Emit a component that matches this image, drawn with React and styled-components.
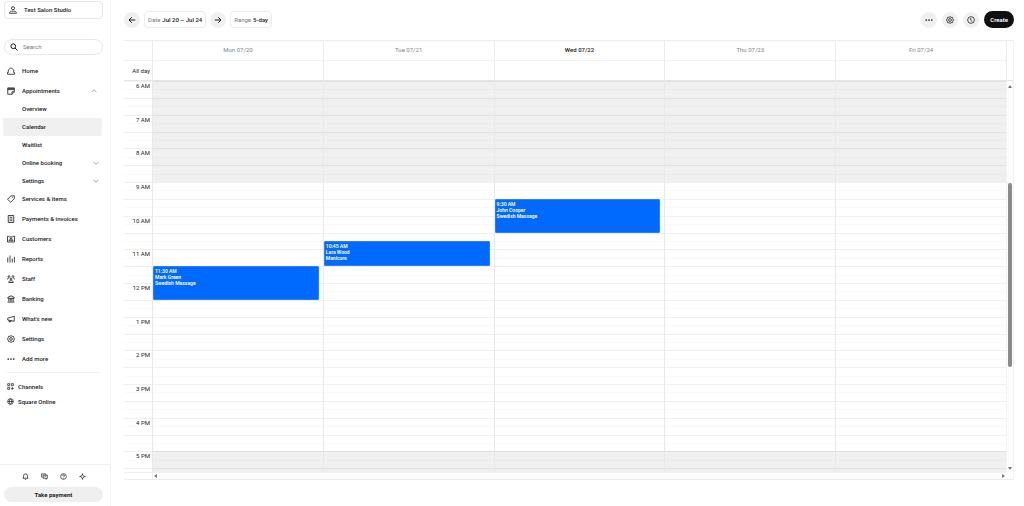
import React from "react";
import styled, { createGlobalStyle, css } from "styled-components";

const GlobalStyle = createGlobalStyle`
  *, *::before, *::after { box-sizing: border-box; }
  body {
    margin: 0;
    background: #fff;
    color: #1a1a1a;
    font-family: Roboto, "Liberation Sans", sans-serif;
    font-size: 6px;
    line-height: 8px;
  }
  button, input { font: inherit; color: inherit; }
  button { border: 0; padding: 0; background: none; cursor: pointer; }
  ul { list-style: none; margin: 0; padding: 0; }
`;

const Shell = styled.div`
  display: flex;
  height: 100vh;
`;

/* ---------- icons ---------- */

const Svg = styled.svg`
  display: block;
  flex: none;
  width: ${(p) => p.$size}px;
  height: ${(p) => p.$size}px;
  fill: none;
  stroke: currentColor;
  stroke-width: ${(p) => p.$weight};
`;

const gear =
  "M8 1.2 L10.2 2.6 L13 2.8 L13.6 5.6 L15 8 L13.6 10.4 L13 13.2 L10.2 13.4 L8 14.8 L5.8 13.4 L3 13.2 L2.4 10.4 L1 8 L2.4 5.6 L3 2.8 L5.8 2.6 Z";

const shapes = {
  person: (
    <>
      <circle cx="8" cy="4.4" r="3.1" />
      <path d="M1 14.5c0-3 3-4.200 7-4.200s7 1.200 7 4.200z" />
    </>
  ),
  search: (
    <>
      <circle cx="6.500" cy="6.500" r="4.700" />
      <path d="M10 10l5 5" />
    </>
  ),
  home: <path d="M8 1.500L13.500 6V11H15v3.500H1V11h1.500V6z" />,
  calendar: (
    <>
      <path d="M1.500 1.800h13V10L10 14.500H1.500zM1.500 5.200h13M14.500 9.500H10v5" />
      <path d="M1.500 3.300h13" />
    </>
  ),
  tag: (
    <>
      <path d="M8 1.800L14.800 1.500 14.500 7.500 7.500 14.500 1 8.500z" />
      <path d="M11 4.500v1.500" />
    </>
  ),
  invoice: <path d="M2.500 1h11v14h-11zM5 4.500h6M5 8h6M5 11.500h6" />,
  customers: (
    <>
      <path d="M5 2.500H1v11.500h14V2.500h-4" />
      <circle cx="8" cy="5.200" r="2" />
      <path d="M4 11.500c0-2 1.500-3 4-3s4 1 4 3z" />
    </>
  ),
  reports: <path d="M1.500 5v10M6 1v14M10.500 7v8M14.800 3.500v11.500" />,
  staff: (
    <>
      <circle cx="4" cy="3" r="1.700" />
      <circle cx="12" cy="3" r="1.700" />
      <circle cx="8" cy="8" r="1.900" />
      <path d="M.800 9c0-2 1.200-3 3.200-3M15.200 9c0-2-1.200-3-3.200-3M3.500 15c0-2.300 1.700-3.500 4.500-3.500s4.500 1.200 4.500 3.500z" />
    </>
  ),
  bank: <path d="M1.500 6.500V4.800L8 1.500l6.500 3.300v1.700zM3.500 6.500V13M6.500 6.500V13M9.500 6.500V13M12.500 6.500V13M1 14.200h14" />,
  megaphone: <path d="M1.500 6.200L14.500 2.500v10L1.500 10zM4 10.500v2.800h4v-1.800" />,
  gear: (
    <>
      <path d={gear} />
      <circle cx="8" cy="8" r="2.800" />
    </>
  ),
  more: (
    <g fill="currentColor" stroke="none">
      <circle cx="2.500" cy="8" r="1.700" />
      <circle cx="8" cy="8" r="1.700" />
      <circle cx="13.500" cy="8" r="1.700" />
    </g>
  ),
  channels: <path d="M1.500 1.500h4.500v4.500H1.500zM10 1.500h4.500v4.500H10zM1.500 10h4.500v4.500H1.500zM12.300 9v6.500M9 12.300h6.500" />,
  globe: (
    <>
      <circle cx="8" cy="8" r="6.500" />
      <path d="M1.500 8h13M8 1.500c-4 4-4 9 0 13M8 1.500c4 4 4 9 0 13" />
    </>
  ),
  bell: <path d="M3.500 12V6.500a4.500 4.500 0 0 1 9 0V12M1.800 12h12.400M6.500 14.500h3" />,
  chat: (
    <>
      <path d="M4 9.500H1.500V2h9.500v2.500" />
      <path d="M5 5h9.500v7H12v2.500L9 12H5zM8 8.500h3.500" />
    </>
  ),
  help: (
    <>
      <circle cx="8" cy="8" r="6.500" />
      <path d="M5.800 6.500c0-3 4.500-3 4.500 0C10.300 8 8 8 8 9.700M8 11v1.500" />
    </>
  ),
  spark: <path d="M8 1.500c.500 4.500 2 6 6.500 6.500-4.500.500-6 2-6.500 6.500C7.500 10 6 8.500 1.500 8 6 7.500 7.500 6 8 1.500z" />,
  clock: (
    <>
      <circle cx="8" cy="8" r="6.700" />
      <path d="M7.500 4v4.500l3 2.500" />
    </>
  ),
  left: <path d="M14.500 8H2M7.500 2.500L2 8l5.500 5.500" />,
  right: <path d="M1.500 8H14M8.500 2.500L14 8l-5.500 5.500" />,
  up: <path d="M1.500 11L8 4.500l6.500 6.500" />,
  down: <path d="M1.500 5L8 11.500 14.500 5" />,
};

const Icon = ({ name, size = 8, weight = 1.6 }) => (
  <Svg viewBox="0 0 16 16" $size={size} $weight={weight} aria-hidden="true">
    {shapes[name]}
  </Svg>
);

/* ---------- sidebar ---------- */

const Sidebar = styled.aside`
  display: flex;
  flex-direction: column;
  flex: none;
  width: 111px;
  border-right: 1px solid #f4f4f4;
  font-weight: 500;
`;

const StoreButton = styled.button`
  display: flex;
  align-items: center;
  gap: 7px;
  height: 18px;
  margin: 1px 7px 0 4px;
  padding: 0 4px;
  border: 1px solid #e8e8e8;
  border-radius: 4px;
  font-weight: 500;
`;

const SearchBox = styled.label`
  display: flex;
  align-items: center;
  gap: 5px;
  height: 16px;
  margin: 20px 7px 6px 4px;
  padding: 0 5px;
  border: 1px solid #e8e8e8;
  border-radius: 8px;
`;

const SearchInput = styled.input`
  width: 100%;
  min-width: 0;
  padding: 0;
  border: 0;
  outline: 0;
  background: transparent;
  font-weight: 400;
  &::placeholder { color: #777; opacity: 1; }
`;

const NavLink = styled.a`
  display: flex;
  align-items: center;
  gap: 7px;
  height: 20px;
  padding: 0 12px 0 7px;
  color: inherit;
  text-decoration: none;
`;

const NavToggle = styled.button`
  display: flex;
  align-items: center;
  gap: 7px;
  width: 100%;
  height: 19px;
  padding: 0 13px 0 7px;
  font-weight: 500;
  color: #1a1a1a;
  & > svg:last-child { margin-left: auto; color: #666; }
`;

const SubList = styled.ul`
  margin: 0 8px -1px 3px;
`;

const subItem = css`
  display: flex;
  align-items: center;
  justify-content: space-between;
  width: 100%;
  height: 18px;
  padding: 0 3px 0 19px;
  border-radius: 2px;
  background: ${(p) => (p.$active ? "#f0f0f0" : "transparent")};
  color: #1a1a1a;
  font-weight: 500;
  text-decoration: none;
  & > svg { color: #666; }
`;
const SubLink = styled.a`${subItem}`;
const SubToggle = styled.button`${subItem}`;

const ChannelList = styled.ul`
  margin: 3px 11px 0 7px;
  padding-top: 6px;
  border-top: 1px solid #f0f0f0;
`;

const ChannelLink = styled.a`
  display: flex;
  align-items: center;
  gap: 4px;
  height: 15px;
  color: inherit;
  text-decoration: none;
`;

const SideFooter = styled.div`
  margin-top: auto;
  padding: 8px 7px 4px 4px;
  border-top: 1px solid #f0f0f0;
`;

const ShortcutRow = styled.div`
  display: flex;
  justify-content: center;
  gap: 12px;
  margin-bottom: 7px;
`;

const Shortcut = styled.button`
  display: flex;
`;

const PayButton = styled.button`
  display: block;
  width: 100%;
  height: 15px;
  border-radius: 8px;
  background: #efefef;
  font-weight: 700;
`;

/* ---------- toolbar ---------- */

const Main = styled.main`
  display: flex;
  flex-direction: column;
  flex: 1;
  min-width: 0;
  padding: 11px 10px 26px 13px;
`;

const Toolbar = styled.div`
  display: flex;
  justify-content: space-between;
  margin-bottom: 12px;
`;

const ToolGroup = styled.div`
  display: flex;
  align-items: center;
  gap: ${(p) => p.$gap}px;
`;

const RoundButton = styled.button`
  display: grid;
  place-items: center;
  width: 16px;
  height: 16px;
  border-radius: 50%;
  background: #f0f0f0;
`;

const FilterButton = styled.button`
  height: 17px;
  padding: 0 3px;
  border: 1px solid #ebebeb;
  border-radius: 4px;
  font-weight: 500;
  white-space: nowrap;
`;

const FilterLabel = styled.span`
  margin-right: 2px;
  color: #777;
  font-weight: 400;
`;

const CreateButton = styled.button`
  height: 17px;
  padding: 0 6px;
  border-radius: 9px;
  background: #101010;
  color: #fff;
  font-weight: 600;
`;

/* ---------- calendar ---------- */

const Calendar = styled.section`
  display: grid;
  grid-template-columns: minmax(0, 1fr) 7px;
  grid-template-rows: 40px minmax(0, 1fr) 7px;
  flex: 1;
  min-height: 0;
  border-top: 1px solid #ececec;
  border-right: 1px solid #f2f2f2;
  border-bottom: 1px solid #ececec;
`;

const Columns = styled.div`
  display: grid;
  grid-template-columns: 28px repeat(5, minmax(0, 1fr));
`;

const HeadRows = styled(Columns)`
  grid-template-rows: 19px 20px;
  border-bottom: 1px solid #e6e6e6;
`;

const DayName = styled.div`
  padding-top: 5px;
  border-left: 1px solid #ececec;
  text-align: center;
  color: ${(p) => (p.$today ? "#1a1a1a" : "#7b858b")};
  font-weight: ${(p) => (p.$today ? 500 : 400)};
`;

const AllDayCell = styled.div`
  padding: 6px 2px 0 0;
  border-top: 1px solid #f2f2f2;
  border-left: ${(p) => (p.$label ? "0" : "1px solid #ececec")};
  text-align: right;
`;

const Viewport = styled.div`
  overflow: hidden;
`;

const HourGrid = styled(Columns)`
  height: 404px;
`;

const SlotColumn = styled.div`
  display: grid;
  grid-template-rows: repeat(48, minmax(0, 1fr));
  grid-template-columns: minmax(0, 1fr);
  border-left: ${(p) => (p.$label ? "0" : "1px solid #e9e9e9")};
`;

const Slot = styled.div`
  grid-column: 1;
  border-top: 1px solid ${(p) => (p.$strong ? "rgba(0,0,0,.06)" : "rgba(0,0,0,.02)")};
  background: ${(p) => (p.$closed ? "#f0f0f0" : "transparent")};
`;

const HourLabel = styled.div`
  grid-column: 1;
  padding: 1px 2px 0 0;
  text-align: right;
  white-space: nowrap;
`;

const EventCard = styled.button`
  display: flex;
  flex-direction: column;
  grid-column: 1;
  z-index: 1;
  margin: 0 4px 0 0;
  padding: 1px;
  border: 1px solid #2a7fff;
  border-radius: 1px;
  background: #006aff;
  color: #fff;
  font-size: 5px;
  font-weight: 600;
  line-height: 6px;
  text-align: left;
`;

const TrackV = styled.div`
  display: grid;
  grid-template-rows: 9px 93fr 183fr 98fr 6px;
  justify-items: center;
  align-items: center;
  border-left: 1px solid #f4f4f4;
  background: #fcfcfc;
`;

const HeadEnd = styled.div`
  border-left: 1px solid #ececec;
  border-bottom: 1px solid #e6e6e6;
`;

const Thumb = styled.div`
  grid-row: 3;
  width: 4px;
  height: 100%;
  border-radius: 2px;
  background: #8b8b8b;
`;

const Bottom = styled.div`
  border-top: 1px solid #f0f0f0;
`;

const TrackH = styled.div`
  display: flex;
  align-items: center;
  justify-content: space-between;
  height: 100%;
  margin-left: 28px;
  padding: 0 1px;
  border-left: 1px solid #ececec;
  background: #fcfcfc;
`;

const Arrow = styled.svg`
  display: block;
  width: 4px;
  height: 4px;
  fill: #777;
  grid-row: ${(p) => p.$row || "auto"};
`;

const days = [
  { name: "Mon 07/20", event: { start: 22, end: 26, lines: ["11:30 AM", "Mark Green", "Swedish Massage"] } },
  { name: "Tue 07/21", event: { start: 19, end: 22, lines: ["10:45 AM", "Lara Wood", "Manicure"] } },
  { name: "Wed 07/22", today: true, event: { start: 14, end: 18, lines: ["9:30 AM", "John Cooper", "Swedish Massage"] } },
  { name: "Thu 07/23" },
  { name: "Fri 07/24" },
];
const hours = ["6 AM", "7 AM", "8 AM", "9 AM", "10 AM", "11 AM", "12 PM", "1 PM", "2 PM", "3 PM", "4 PM", "5 PM"];
const slots = Array.from({ length: 48 }, (_, i) => i);
const isClosed = (i) => i < 12 || i >= 44;

const navItems = [
  ["tag", "Services & items"],
  ["invoice", "Payments & invoices"],
  ["customers", "Customers"],
  ["reports", "Reports"],
  ["staff", "Staff"],
  ["bank", "Banking"],
  ["megaphone", "What's new"],
  ["gear", "Settings"],
  ["more", "Add more"],
];

const SlotLines = ({ label }) =>
  slots.map((i) => (
    <Slot key={i} $strong={i % 2 === 0} $closed={!label && isClosed(i)} style={{ gridRow: i + 1 }} />
  ));

export default function App() {
  return (
    <>
      <GlobalStyle />
      <Shell>
        <Sidebar>
          <StoreButton>
            <Icon name="person" />
            Test Salon Studio
          </StoreButton>
          <SearchBox>
            <Icon name="search" weight={2} />
            <SearchInput type="search" placeholder="Search" aria-label="Search" />
          </SearchBox>
          <nav>
            <ul>
              <li><NavLink href="#home"><Icon name="home" />Home</NavLink></li>
              <li>
                <NavToggle aria-expanded="true">
                  <Icon name="calendar" />
                  Appointments
                  <Icon name="up" size={6} />
                </NavToggle>
                <SubList>
                  <li><SubLink href="#overview">Overview</SubLink></li>
                  <li><SubLink href="#calendar" $active aria-current="page">Calendar</SubLink></li>
                  <li><SubLink href="#waitlist">Waitlist</SubLink></li>
                  <li><SubToggle>Online booking<Icon name="down" size={6} /></SubToggle></li>
                  <li><SubToggle>Settings<Icon name="down" size={6} /></SubToggle></li>
                </SubList>
              </li>
              {navItems.map(([icon, text]) => (
                <li key={text}><NavLink href="#"><Icon name={icon} />{text}</NavLink></li>
              ))}
            </ul>
            <ChannelList>
              <li><ChannelLink href="#channels"><Icon name="channels" size={7} />Channels</ChannelLink></li>
              <li><ChannelLink href="#online"><Icon name="globe" size={7} />Square Online</ChannelLink></li>
            </ChannelList>
          </nav>
          <SideFooter>
            <ShortcutRow>
              <Shortcut aria-label="Notifications"><Icon name="bell" size={7} /></Shortcut>
              <Shortcut aria-label="Messages"><Icon name="chat" size={7} /></Shortcut>
              <Shortcut aria-label="Help"><Icon name="help" size={7} /></Shortcut>
              <Shortcut aria-label="Assistant"><Icon name="spark" size={7} /></Shortcut>
            </ShortcutRow>
            <PayButton>Take payment</PayButton>
          </SideFooter>
        </Sidebar>

        <Main>
          <Toolbar>
            <ToolGroup $gap={4}>
              <RoundButton aria-label="Previous"><Icon name="left" weight={2} /></RoundButton>
              <FilterButton><FilterLabel>Date</FilterLabel>Jul 20 – Jul 24</FilterButton>
              <RoundButton aria-label="Next"><Icon name="right" weight={2} /></RoundButton>
              <FilterButton><FilterLabel>Range</FilterLabel>5-day</FilterButton>
            </ToolGroup>
            <ToolGroup $gap={5}>
              <RoundButton aria-label="More"><Icon name="more" /></RoundButton>
              <RoundButton aria-label="Calendar settings"><Icon name="gear" /></RoundButton>
              <RoundButton aria-label="History"><Icon name="clock" /></RoundButton>
              <CreateButton>Create</CreateButton>
            </ToolGroup>
          </Toolbar>

          <Calendar>
            <HeadRows>
              <div />
              {days.map((d) => <DayName key={d.name} $today={d.today}>{d.name}</DayName>)}
              <AllDayCell $label>All day</AllDayCell>
              {days.map((d) => <AllDayCell key={d.name} />)}
            </HeadRows>
            <HeadEnd />
            <Viewport>
              <HourGrid>
                <SlotColumn $label>
                  <SlotLines label />
                  {hours.map((h, i) => (
                    <HourLabel key={h} style={{ gridRow: `${i * 4 + 1} / span 2` }}>{h}</HourLabel>
                  ))}
                </SlotColumn>
                {days.map((d) => (
                  <SlotColumn key={d.name}>
                    <SlotLines />
                    {d.event && (
                      <EventCard style={{ gridRow: `${d.event.start + 1} / ${d.event.end + 1}` }}>
                        {d.event.lines.map((line) => <span key={line}>{line}</span>)}
                      </EventCard>
                    )}
                  </SlotColumn>
                ))}
              </HourGrid>
            </Viewport>
            <TrackV>
              <Arrow viewBox="0 0 4 4" $row={1}><path d="M2 1l2 3H0z" /></Arrow>
              <Thumb />
              <Arrow viewBox="0 0 4 4" $row={5}><path d="M0 0h4L2 3z" /></Arrow>
            </TrackV>
            <Bottom>
              <TrackH>
                <Arrow viewBox="0 0 4 4"><path d="M3 0v4L0 2z" /></Arrow>
                <Arrow viewBox="0 0 4 4"><path d="M1 0v4l3-2z" /></Arrow>
              </TrackH>
            </Bottom>
            <div />
          </Calendar>
        </Main>
      </Shell>
    </>
  );
}
